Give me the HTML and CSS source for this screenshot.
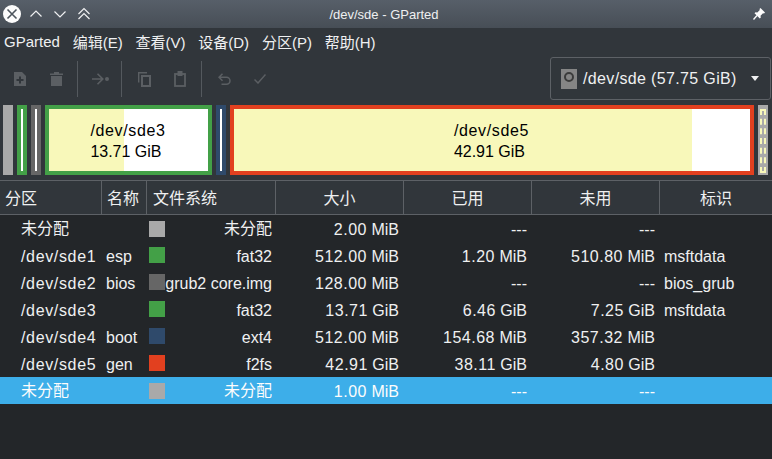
FILE: index.html
```html
<!DOCTYPE html>
<html lang="zh">
  <head>
    <title>/dev/sde - GParted</title>
    <link rel="stylesheet" href="styles.css">
  </head>

  <body>
    <div class="titlebar">
      <div class="title-btns">
        <svg class="win-btn" width="18" height="18" viewBox="0 0 18 18"><circle cx="9" cy="9" r="9" fill="#fcfcfc"/><path d="M4.500 4.500l9 9M13.500 4.500l-9 9" stroke="#4d555d" stroke-width="1.600"/></svg>
        <svg class="win-btn" width="14" height="14" viewBox="0 0 14 14"><path d="M1.500 9.500L7 4l5.500 5.500" fill="none" stroke="#eff0f1" stroke-width="1.200"/></svg>
        <svg class="win-btn" width="14" height="14" viewBox="0 0 14 14"><path d="M1.500 4.500L7 10l5.500-5.500" fill="none" stroke="#eff0f1" stroke-width="1.200"/></svg>
        <svg class="win-btn" width="14" height="14" viewBox="0 0 14 14"><path d="M1.500 7L7 1.500 12.500 7M1.500 12L7 6.500 12.500 12" fill="none" stroke="#eff0f1" stroke-width="1.200"/></svg>
      </div>
      <div class="title-text">/dev/sde - GParted</div>
      <div class="title-right">
        <svg width="12" height="12" viewBox="0 0 12 12"><path d="M7.500 0L12 4.500 11 5.500 10 5.200 7.500 7.700 7.800 9.500 6.800 10.500 1.500 5.200 2.500 4.200 4.300 4.500 6.800 2 6.500 1z" fill="#fcfcfc"/><path d="M4 7.500L.5 11.500" stroke="#fcfcfc" stroke-width="1.400"/></svg>
      </div>
    </div>

    <div class="menubar">
      <span>GParted</span>
      <span>编辑(E)</span>
      <span>查看(V)</span>
      <span>设备(D)</span>
      <span>分区(P)</span>
      <span>帮助(H)</span>
    </div>

    <div class="toolbar">
      <div class="tool"><svg width="12" height="14" viewBox="0 0 12 14"><path d="M0 0h8l4 4v10H0z" fill="#5b5f63"/><path d="M5 4.500h2V7h2.500v2H7v2.500H5V9H2.500V7H5z" fill="#31363b"/></svg></div>
      <div class="tool"><svg width="13" height="14" viewBox="0 0 13 14"><path d="M0 1.500h13v1.500H0zM4 0h5v1.500H4zM1 4h11v10H1z" fill="#5b5f63"/></svg></div>
      <div class="tool-sep"></div>
      <div class="tool"><svg width="17" height="12" viewBox="0 0 17 12"><path d="M0 6h10M5.500 .7L10.800 6 5.500 11.300" fill="none" stroke="#5b5f63" stroke-width="1.600"/><circle cx="15" cy="6" r="2" fill="#5b5f63"/></svg></div>
      <div class="tool-sep"></div>
      <div class="tool"><svg width="13" height="15" viewBox="0 0 13 15"><path d="M.7 10.500V.7H9" fill="none" stroke="#5b5f63" stroke-width="1.400"/><rect x="4" y="4" width="8" height="10" fill="none" stroke="#5b5f63" stroke-width="2"/></svg></div>
      <div class="tool"><svg width="12" height="16" viewBox="0 0 12 16"><rect x="1" y="3" width="10" height="12" fill="none" stroke="#5b5f63" stroke-width="1.800"/><rect x="3.500" y="0" width="5" height="5" fill="#5b5f63"/></svg></div>
      <div class="tool-sep"></div>
      <div class="tool"><svg width="13" height="12" viewBox="0 0 13 12"><path d="M4.500 .7L1 4.200 4.500 7.700M1.500 4.200h7a3.500 3.500 0 0 1 0 7H3.500" fill="none" stroke="#5b5f63" stroke-width="1.500"/></svg></div>
      <div class="tool"><svg width="12" height="10" viewBox="0 0 12 10"><path d="M.5 5.500l3.500 3.500 7.500-8.500" fill="none" stroke="#5b5f63" stroke-width="1.500"/></svg></div>
      <div class="combo">
        <svg width="16" height="20" viewBox="0 0 16 20"><rect width="16" height="20" fill="#858585"/><circle cx="8" cy="8" r="4" fill="none" stroke="#3b3b3b" stroke-width="2"/></svg>
        <span class="combo-text">/dev/sde (57.75 GiB)</span>
        <span class="combo-arrow"></span>
      </div>
    </div>

    <div class="diskmap">
      <div class="part part-unalloc"></div>
      <div class="part part-green"><div class="part-fill"></div></div>
      <div class="part part-grey"><div class="part-fill"></div></div>
      <div class="part part-big part-green part-sde3"><div class="part-label"><div class="wide">/dev/sde3</div><div>13.71 GiB</div></div></div>
      <div class="part part-blue"><div class="part-fill"></div></div>
      <div class="part part-big part-red part-sde5"><div class="part-label"><div class="wide">/dev/sde5</div><div>42.91 GiB</div></div></div>
      <div class="part part-unalloc part-last"><div class="part-dash"></div></div>
    </div>

    <div class="row head">
      <div class="head-cell left">分区</div>
      <div class="head-cell left">名称</div>
      <div class="head-cell left">文件系统</div>
      <div class="head-cell">大小</div>
      <div class="head-cell">已用</div>
      <div class="head-cell">未用</div>
      <div class="head-cell">标识</div>
    </div>

    <div class="list">
      <div class="row">
        <div class="dev zh">未分配</div><div class="name"></div>
        <div class="fs"><span class="swatch sw-unalloc"></span><span class="fs-name zh">未分配</span></div>
        <div class="num"><span class="val">2.00</span> MiB</div><div class="num">---</div><div class="num">---</div><div class="flag"></div>
      </div>
      <div class="row">
        <div class="dev wide">/dev/sde1</div><div class="name">esp</div>
        <div class="fs"><span class="swatch sw-green"></span><span class="fs-name">fat32</span></div>
        <div class="num"><span class="val">512.00</span> MiB</div><div class="num"><span class="val">1.20</span> MiB</div><div class="num"><span class="val">510.80</span> MiB</div><div class="flag">msftdata</div>
      </div>
      <div class="row">
        <div class="dev wide">/dev/sde2</div><div class="name">bios</div>
        <div class="fs"><span class="swatch sw-grey"></span><span class="fs-name">grub2 core.img</span></div>
        <div class="num"><span class="val">128.00</span> MiB</div><div class="num">---</div><div class="num">---</div><div class="flag">bios_grub</div>
      </div>
      <div class="row">
        <div class="dev wide">/dev/sde3</div><div class="name"></div>
        <div class="fs"><span class="swatch sw-green"></span><span class="fs-name">fat32</span></div>
        <div class="num"><span class="val">13.71</span> GiB</div><div class="num"><span class="val">6.46</span> GiB</div><div class="num"><span class="val">7.25</span> GiB</div><div class="flag">msftdata</div>
      </div>
      <div class="row">
        <div class="dev wide">/dev/sde4</div><div class="name">boot</div>
        <div class="fs"><span class="swatch sw-blue"></span><span class="fs-name">ext4</span></div>
        <div class="num"><span class="val">512.00</span> MiB</div><div class="num"><span class="val">154.68</span> MiB</div><div class="num"><span class="val">357.32</span> MiB</div><div class="flag"></div>
      </div>
      <div class="row">
        <div class="dev wide">/dev/sde5</div><div class="name">gen</div>
        <div class="fs"><span class="swatch sw-red"></span><span class="fs-name">f2fs</span></div>
        <div class="num"><span class="val">42.91</span> GiB</div><div class="num"><span class="val">38.11</span> GiB</div><div class="num"><span class="val">4.80</span> GiB</div><div class="flag"></div>
      </div>
      <div class="row selected">
        <div class="dev zh">未分配</div><div class="name"></div>
        <div class="fs"><span class="swatch sw-unalloc"></span><span class="fs-name zh">未分配</span></div>
        <div class="num"><span class="val">1.00</span> MiB</div><div class="num">---</div><div class="num">---</div><div class="flag"></div>
      </div>
    </div>
  </body>
</html>
```

FILE: styles.css
```css
html, body {
  height: 100%;
}

body {
  margin: 0;
  display: flex;
  flex-direction: column;
  overflow: hidden;
  background-color: #31363b;
  color: #eff0f1;
  font-family: "Liberation Sans", "Noto Sans CJK SC", sans-serif;
  font-size: 16px;
}

/* Window title */
.titlebar {
  height: 27px;
  padding-bottom: 1px;
  display: flex;
  align-items: center;
  background: linear-gradient(#575f69, #474e56);
}

.title-btns {
  flex: 1;
  display: flex;
  align-items: center;
  padding-left: 3px;
}

.win-btn {
  margin-right: 8px;
}

.win-btn + .win-btn {
  margin-right: 10px;
}

.title-text {
  font-size: 13px;
  padding-top: 2px;
}

.title-right {
  flex: 1;
  display: flex;
  justify-content: flex-end;
  padding-right: 7px;
}

/* Menu */
.menubar {
  height: 27px;
  padding: 0 0 2px 4px;
  display: flex;
  align-items: center;
  gap: 12.800px;
  font-size: 15px;
}

/* Toolbar */
.toolbar {
  height: 44px;
  display: flex;
  align-items: center;
  padding-left: 2px;
  padding-right: 1px;
}

.tool {
  width: 36px;
  height: 36px;
  display: flex;
  align-items: center;
  justify-content: center;
}

.tool-sep {
  width: 1px;
  height: 36px;
  margin: 0 4px 0 3px;
  background-color: #54595e;
}

.combo {
  align-self: flex-start;
  margin-left: auto;
  width: 221px;
  height: 43px;
  box-sizing: border-box;
  display: flex;
  align-items: center;
  padding: 0 11px 0 10px;
  border: 1px solid #5d6166;
  border-radius: 3px;
}

.combo-text {
  margin-left: 6px;
  letter-spacing: .35px;
}

.combo-arrow {
  margin-left: auto;
  border-left: 4.500px solid transparent;
  border-right: 4.500px solid transparent;
  border-top: 5px solid #eff0f1;
}

/* Partition map */
.diskmap {
  height: 70px;
  margin: 4px 4px 0 3px;
  display: flex;
  gap: 4px;
}

.part {
  width: 10px;
  box-sizing: border-box;
  border: 4px solid;
}

.part-fill {
  height: 100%;
  background-color: #fff;
}

.part-big {
  display: flex;
  align-items: center;
  justify-content: center;
  color: #000;
  line-height: 21px;
}

.part-label {
  padding: 2px 1px 0 0;
}

.part-unalloc {
  border-color: #a9a9a9;
  background-color: #a9a9a9;
}

.part-green {
  border-color: #43a047;
}

.part-grey {
  border-color: #666;
}

.part-blue {
  border-color: #2f4a6b;
}

.part-red {
  border-color: #e2401f;
}

.part-sde3 {
  width: 167px;
  background: linear-gradient(to right, #f8f8ba 75px, #fff 75px);
}

.part-sde5 {
  width: 524px;
  background: linear-gradient(to right, #f8f8ba 458px, #fff 458px);
}

.part-last {
  border-width: 4px 2px 2px;
}

.part-dash {
  height: 100%;
  box-sizing: border-box;
  border: 2px dashed #f8f8ba;
}

/* Partition list */
.row {
  display: grid;
  grid-template-columns: 102px 45px 129px 128px 128px 128px 1fr;
  height: 27px;
  align-items: center;
  white-space: nowrap;
}

.head {
  height: 33px;
  margin-top: 5px;
  border-top: 1px solid #5d6166;
  border-bottom: 1px solid #5d6166;
}

.head-cell {
  height: 100%;
  display: flex;
  align-items: center;
  justify-content: center;
  box-sizing: border-box;
  padding-bottom: 2px;
  border-right: 1px solid #5d6166;
}

.head-cell:last-child {
  border-right: none;
}

.head-cell.left {
  justify-content: flex-start;
  padding-left: 5px;
}

.head-cell.left:nth-child(3) {
  padding-left: 6px;
}

.list {
  flex: 1;
  background-color: #232629;
}

.selected {
  background-color: #3daee9;
  color: #fcfcfc;
}

.dev {
  padding-left: 21px;
}

.name {
  padding-left: 4px;
}

.dev, .name, .num, .flag, .fs-name {
  padding-top: 2px;
}

/* CJK text sits higher in the line than the latin text */
.zh {
  padding-top: 0;
  padding-bottom: 4px;
}

.wide {
  letter-spacing: .65px;
}

.fs {
  display: flex;
  align-items: center;
  justify-content: space-between;
  padding: 0 4px 0 2px;
}

.swatch {
  width: 16px;
  height: 16px;
  flex: none;
  margin-bottom: 1px;
}

.sw-unalloc {
  background-color: #a9a9a9;
}

.sw-green {
  background-color: #43a047;
}

.sw-grey {
  background-color: #666;
}

.sw-blue {
  background-color: #2f4a6b;
}

.sw-red {
  background-color: #e2401f;
}

.num {
  text-align: right;
  padding-right: 5px;
}

.val {
  letter-spacing: .5px;
}

.flag {
  padding-left: 4px;
}
```
